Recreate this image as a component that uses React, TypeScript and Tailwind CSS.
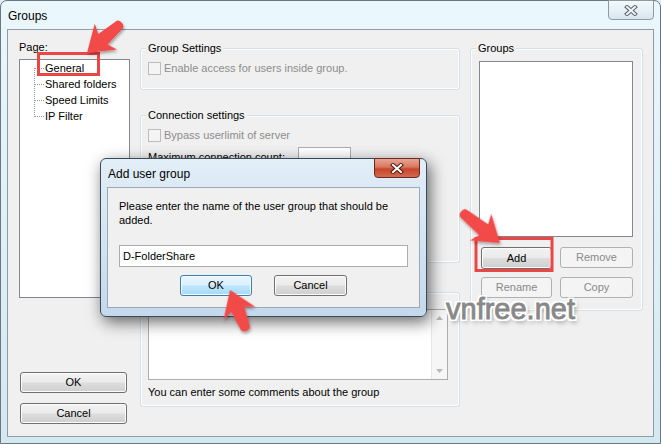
import React from "react";

type BtnKind = "normal" | "default" | "disabled";

function Button({ label, kind = "normal", className = "" }: { label: string; kind?: BtnKind; className?: string }) {
  const base = "flex items-center justify-center rounded-[3px] border leading-[13px] shrink-0";
  const kinds: Record<BtnKind, string> = {
    normal:
      "border-[#707070] bg-[linear-gradient(180deg,#f2f2f2_0%,#ebebeb_48%,#dddddd_52%,#cfcfcf_100%)] text-black shadow-[inset_0_0_0_1px_#fcfcfc]",
    default:
      "border-[#3c7fb1] bg-[linear-gradient(180deg,#eaf6fd_0%,#d9f0fc_48%,#bee6fd_52%,#a7d9f5_100%)] text-black shadow-[inset_0_0_0_1px_#f4fbff]",
    disabled: "border-[#adb2b5] bg-[#f4f4f4] text-[#8a8a8a]",
  };
  return <div className={`${base} ${kinds[kind]} ${className}`}>{label}</div>;
}

function Checkbox({ label }: { label: string }) {
  return (
    <div className="flex items-center h-[13px]">
      <div className="w-[13px] h-[13px] shrink-0 border border-[#bcbcbc] bg-[#f4f4f4]" />
      <span className="ml-[3px] text-[#8d8d8d] leading-[13px] whitespace-nowrap">{label}</span>
    </div>
  );
}

function Legend({ children }: { children: React.ReactNode }) {
  return <legend className="ml-[5px] px-[2px] leading-[16px] bg-[#f0f0f0] text-black">{children}</legend>;
}

function XGlyph({ light }: { light?: boolean }) {
  return (
    <svg width="14" height="11" viewBox="0 0 14 11">
      <g strokeLinecap="square">
        <path d="M3 2 L11 9 M11 2 L3 9" stroke={light ? "#4a1a12" : "#59636d"} strokeWidth="4" />
        <path d="M3 2 L11 9 M11 2 L3 9" stroke={light ? "#ffffff" : "#f2f4f6"} strokeWidth="2" />
      </g>
    </svg>
  );
}

function arrowPath(L: number) {
  return `M0 0 L-25 -17 L-21 -7 L${-L + 4} -5 Q${-L} -5 ${-L} 0 Q${-L} 5 ${-L + 4} 5 L-21 7 L-25 17 Z`;
}

export default function App() {
  return (
    <div className="relative w-[661px] h-[444px] overflow-hidden bg-[#dfeef6] text-[11px] leading-[13px] text-black font-['Liberation_Sans',Arial,sans-serif]">
      {/* Main window */}
      <div className="flex flex-col w-full h-full rounded-t-[7px] border border-[#6b7780] bg-[linear-gradient(180deg,#eaf7fc_0%,#dff0f7_50%,#d4e8f2_100%)]">
        <div className="flex h-[28px] shrink-0 pl-[7px] pr-[6px]">
          <span className="text-[12px] leading-[14px] mt-[8px]">Groups</span>
          <div className="ml-auto -mt-px w-[46px] h-[20px] rounded-b-[4px] border border-[#8d9aa6] bg-[linear-gradient(180deg,#f4f9fc_0%,#e6f0f6_50%,#d8e6ee_100%)] flex items-center justify-center">
            <XGlyph />
          </div>
        </div>
        <div className="flex-1 mx-[6px] mb-[6px] border border-[#8f9ba5] bg-[#f0f0f0] flex pl-[11px]">
          {/* Left column */}
          <div className="w-[111px] shrink-0 flex flex-col pt-[10px] pb-[12px]">
            <div className="h-[19px] pt-[1px]">Page:</div>
            <div className="relative h-[239px] border border-[#828790] bg-white">
              <svg className="absolute left-0 top-0" width="40" height="80">
                <g stroke="#9a9a9a" strokeWidth="1" strokeDasharray="1 1" shapeRendering="crispEdges">
                  <path d="M14.5 8 L14.5 57" />
                  <path d="M15 8.5 L24 8.5 M15 24.5 L24 24.5 M15 40.5 L24 40.5 M15 56.5 L24 56.5" />
                </g>
              </svg>
              <div className="flex flex-col pl-[25px]">
                <div className="h-[16px] flex items-center">General</div>
                <div className="h-[16px] flex items-center">Shared folders</div>
                <div className="h-[16px] flex items-center">Speed Limits</div>
                <div className="h-[16px] flex items-center">IP Filter</div>
              </div>
            </div>
            <div className="flex-1" />
            <Button label="OK" className="ml-[1px] w-[107px] h-[21px]" />
            <Button label="Cancel" className="ml-[1px] mt-[10px] w-[107px] h-[21px]" />
          </div>

          {/* Middle column */}
          <div className="w-[320px] shrink-0 ml-[10px] pt-[10px] flex flex-col">
            <fieldset className="h-[50px] border border-[#d5dfe5] rounded-[3px] shadow-[inset_0_0_0_1px_#ffffff]">
              <Legend>Group Settings</Legend>
              <div className="pt-[6px] pl-[7px]">
                <Checkbox label="Enable access for users inside group." />
              </div>
            </fieldset>
            <fieldset className="mt-[17px] h-[156px] border border-[#d5dfe5] rounded-[3px] shadow-[inset_0_0_0_1px_#ffffff]">
              <Legend>Connection settings</Legend>
              <div className="pt-[6px] pl-[7px] flex flex-col">
                <Checkbox label="Bypass userlimit of server" />
                <div className="mt-[5px] h-[21px] flex items-center">
                  <span className="w-[150px] whitespace-nowrap">Maximum connection count:</span>
                  <div className="w-[53px] h-[21px] border border-[#abadb3] bg-white" />
                </div>
                <div className="mt-[6px] h-[21px] flex items-center">
                  <span className="w-[150px] whitespace-nowrap">Connection limit per IP:</span>
                  <div className="w-[53px] h-[21px] border border-[#abadb3] bg-white" />
                </div>
              </div>
            </fieldset>
            <fieldset className="mt-[21px] h-[123px] border border-[#d5dfe5] rounded-[3px] shadow-[inset_0_0_0_1px_#ffffff]">
              <Legend>Description</Legend>
              <div className="pl-[7px] pr-[11px] flex flex-col">
                <div className="mt-[9px] h-[71px] border border-[#abadb3] bg-white flex">
                  <div className="flex-1" />
                  <div className="w-[16px] bg-[#f6f6f6] border-l border-[#e6e6e6] flex flex-col items-center justify-between py-[6px]">
                    <svg width="7" height="4" viewBox="0 0 7 4"><path d="M0 4 L3.5 0 L7 4 Z" fill="#b8b8b8" /></svg>
                    <svg width="7" height="4" viewBox="0 0 7 4"><path d="M0 0 L3.5 4 L7 0 Z" fill="#b8b8b8" /></svg>
                  </div>
                </div>
                <div className="mt-[6px] whitespace-nowrap">You can enter some comments about the group</div>
              </div>
            </fieldset>
          </div>

          {/* Right column */}
          <div className="w-[173px] shrink-0 ml-[10px] pt-[10px]">
            <fieldset className="h-[271px] border border-[#d5dfe5] rounded-[3px] shadow-[inset_0_0_0_1px_#ffffff]">
              <Legend>Groups</Legend>
              <div className="pl-[8px] flex flex-col">
                <div className="mt-[5px] w-[154px] h-[176px] border border-[#828790] bg-white" />
                <div className="mt-[10px] flex pl-[2px]">
                  <Button label="Add" className="w-[71px] h-[22px] border-[#3c3c3c]" />
                  <Button label="Remove" kind="disabled" className="ml-[8px] w-[73px] h-[21px]" />
                </div>
                <div className="mt-[8px] flex pl-[2px]">
                  <Button label="Rename" kind="disabled" className="w-[71px] h-[21px]" />
                  <Button label="Copy" kind="disabled" className="ml-[8px] w-[73px] h-[21px]" />
                </div>
              </div>
            </fieldset>
          </div>
        </div>
      </div>

      {/* Add user group dialog */}
      <div className="absolute left-[100px] top-[158px] w-[327px] h-[159px] rounded-[6px] border border-[#3a4a5a] bg-[linear-gradient(180deg,#e2eef8_0%,#d3e4f2_50%,#c4d9ec_100%)] shadow-[3px_5px_16px_rgba(0,0,0,0.6)] flex flex-col">
        <div className="flex h-[28px] shrink-0 pl-[7px] pr-[6px]">
          <span className="text-[12px] leading-[14px] mt-[8px]">Add user group</span>
          <div className="ml-auto -mt-px w-[46px] h-[20px] rounded-b-[4px] border border-[#6b2a20] bg-[linear-gradient(180deg,#e8a493_0%,#d7775f_45%,#c7452b_55%,#d26a4f_100%)] flex items-center justify-center">
            <XGlyph light />
          </div>
        </div>
        <div className="flex-1 mx-[6px] mb-[8px] border border-[#9aa8b8] bg-[#f0f0f0] flex flex-col pl-[11px] pr-[11px]">
          <div className="mt-[11px] leading-[14px]">
            Please enter the name of the user group that should be
            <br />
            added.
          </div>
          <div className="mt-[18px] h-[22px] border border-[#abadb3] bg-white flex items-center pl-[3px]">D-FolderShare</div>
          <div className="mt-[8px] flex justify-center">
            <Button label="OK" kind="default" className="w-[72px] h-[21px]" />
            <Button label="Cancel" className="ml-[22px] w-[73px] h-[21px]" />
          </div>
        </div>
      </div>

      {/* Watermark */}
      <div className="absolute left-[446px] top-[295px] text-[29px] leading-[29px] text-[#888888] [-webkit-text-stroke:0.8px_#888888] [text-shadow:-2px_-2px_0_#fff,2px_-2px_0_#fff,-2px_2px_0_#fff,2px_2px_0_#fff,0_-2px_0_#fff,0_2px_0_#fff,-2px_0_0_#fff,2px_0_0_#fff,2px_3px_5px_rgba(0,0,0,0.55)]">
        vnfree.net
      </div>

      {/* Annotations */}
      <svg className="absolute left-0 top-0 pointer-events-none" width="661" height="444">
        <defs>
          <filter id="sh" x="-30%" y="-30%" width="160%" height="160%">
            <feDropShadow dx="1" dy="2" stdDeviation="1.5" floodColor="#000" floodOpacity="0.35" />
          </filter>
        </defs>
        <rect x="38.5" y="53.5" width="60" height="21" fill="none" stroke="#ea4646" strokeWidth="3" />
        <rect x="476" y="238.5" width="76" height="32" fill="none" stroke="#ea4646" strokeWidth="3" />
        <g filter="url(#sh)" fill="#f24848">
          <path transform="translate(87 53) rotate(139)" d={arrowPath(46)} />
          <path transform="translate(500 243) rotate(39)" d={arrowPath(50)} />
          <path transform="translate(230 290) rotate(-112)" d={arrowPath(44)} />
        </g>
      </svg>
    </div>
  );
}
